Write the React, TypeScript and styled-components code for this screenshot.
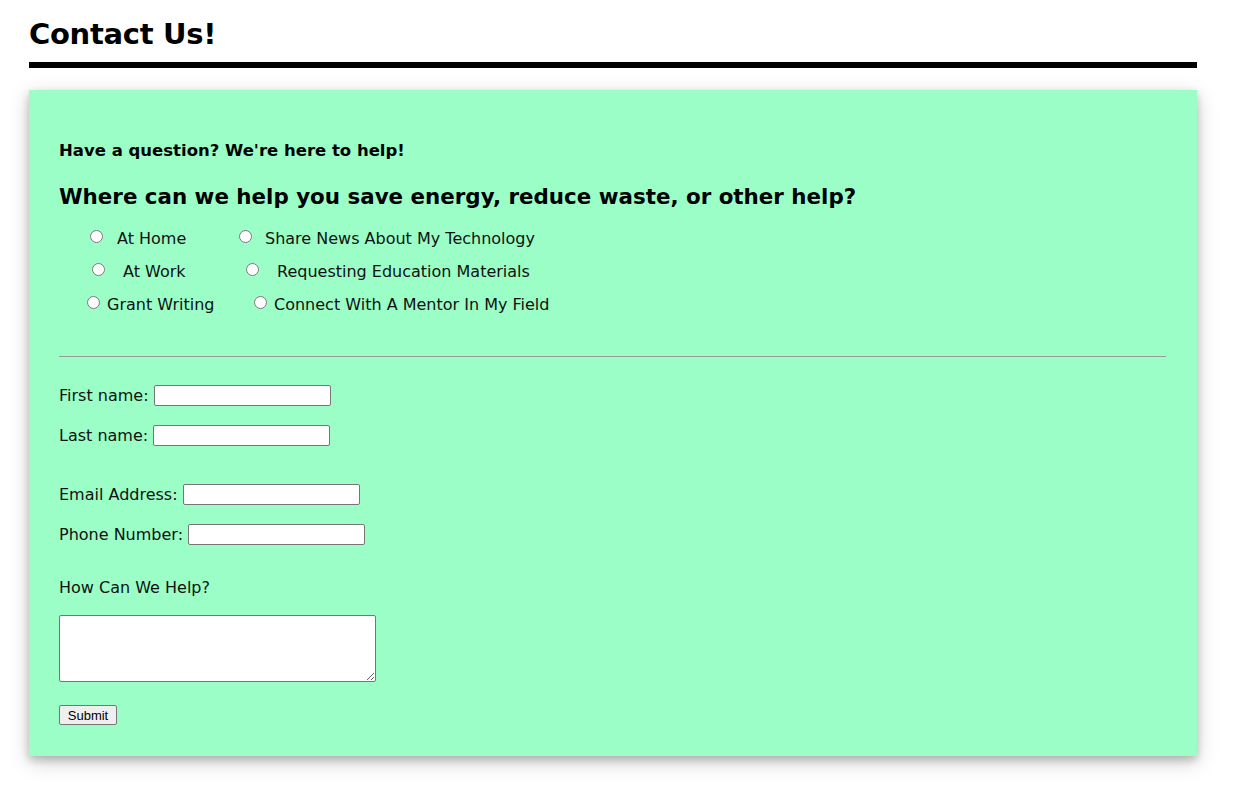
import styled, { createGlobalStyle } from "styled-components";

const GlobalStyle = createGlobalStyle`
  body {
    margin: 0;
    background: #ffffff;
    font-family: "DejaVu Sans", "Open Sans", sans-serif;
    color: #000;
  }
`;

const Page = styled.div`
  padding: 14px 37px 40px 29px;
`;

const Title = styled.h1`
  margin: 0;
  font-size: 29px;
  line-height: 40px;
  font-weight: 700;
  letter-spacing: -0.3px;
`;

const Bar = styled.div`
  margin-top: 8px;
  height: 6px;
  background: #000;
`;

const Card = styled.div`
  margin-top: 22px;
  background: #9afec6;
  padding: 30px 31px 31px 30px;
  box-shadow: 0 4px 8px 0 rgba(0, 0, 0, 0.2), 0 6px 20px 0 rgba(0, 0, 0, 0.19);
`;

const Intro = styled.h4`
  margin: 20px 0 0;
  font-size: 16.5px;
  line-height: 22px;
  font-weight: 700;
`;

const Question = styled.h2`
  margin: 20px 0 0;
  font-size: 21.4px;
  line-height: 30px;
  font-weight: 700;
`;

const Options = styled.div`
  margin-top: 10px;
`;

const OptionRow = styled.div<{ $indent: number }>`
  display: flex;
  align-items: center;
  height: 33px;
  padding-left: ${(p) => p.$indent}px;
  font-size: 16px;
  color: #111;
`;

const Option = styled.label<{ $gap: number; $width?: number }>`
  display: flex;
  align-items: center;
  gap: ${(p) => p.$gap}px;
  width: ${(p) => (p.$width ? `${p.$width}px` : "auto")};
  white-space: nowrap;
`;

const Radio = styled.input.attrs({ type: "radio" })`
  width: 13px;
  height: 13px;
  margin: 0 0 4px;
`;

const Rule = styled.hr`
  margin: 35px 0 0;
  border: none;
  border-top: 1px solid #9a9a9a;
  height: 0;
`;

const Form = styled.form`
  display: flex;
  flex-direction: column;
  padding-top: 28px;
  font-size: 16px;
  color: #111;
`;

const Field = styled.label<{ $space: number }>`
  display: flex;
  align-items: center;
  gap: 5px;
  height: 21px;
  margin-top: ${(p) => p.$space}px;
`;

const TextInput = styled.input`
  box-sizing: border-box;
  width: 177px;
  height: 21px;
  border: 1px solid #767676;
  border-radius: 2px;
  background: #fff;
  padding: 1px 2px;
  font-size: 13px;
`;

const HelpLabel = styled.label`
  margin-top: 33px;
  line-height: 20px;
`;

const Message = styled.textarea`
  box-sizing: border-box;
  margin-top: 17px;
  width: 317px;
  height: 67px;
  border: 1px solid #767676;
  border-radius: 2px;
  background: #fff;
`;

const Submit = styled.button`
  box-sizing: border-box;
  margin-top: 23px;
  align-self: flex-start;
  width: 58px;
  height: 20px;
  padding: 0;
  font-family: "Liberation Sans", Arial, sans-serif;
  font-size: 13px;
  color: #000;
  background: #efefef;
  border: 1px solid #767676;
  border-radius: 2px;
`;

const rows = [
  { indent: 31, first: { text: "At Home", gap: 14, width: 149 }, second: { text: "Share News About My Technology", gap: 13 } },
  { indent: 33, first: { text: "At Work", gap: 18, width: 154 }, second: { text: "Requesting Education Materials", gap: 18 } },
  { indent: 28, first: { text: "Grant Writing", gap: 7, width: 167 }, second: { text: "Connect With A Mentor In My Field", gap: 7 } },
];

export default function App() {
  return (
    <>
      <GlobalStyle />
      <Page>
        <Title>Contact Us!</Title>
        <Bar />
        <Card>
          <Intro>Have a question? We're here to help!</Intro>
          <Question>Where can we help you save energy, reduce waste, or other help?</Question>
          <Options>
            {rows.map((r) => (
              <OptionRow key={r.first.text} $indent={r.indent}>
                <Option $gap={r.first.gap} $width={r.first.width}>
                  <Radio name="help" />
                  {r.first.text}
                </Option>
                <Option $gap={r.second.gap}>
                  <Radio name="help" />
                  {r.second.text}
                </Option>
              </OptionRow>
            ))}
          </Options>
          <Rule />
          <Form onSubmit={(e) => e.preventDefault()}>
            <Field $space={0}>
              First name: <TextInput />
            </Field>
            <Field $space={19}>
              Last name: <TextInput />
            </Field>
            <Field $space={38}>
              Email Address: <TextInput />
            </Field>
            <Field $space={19}>
              Phone Number: <TextInput />
            </Field>
            <HelpLabel>How Can We Help?</HelpLabel>
            <Message />
            <Submit type="submit">Submit</Submit>
          </Form>
        </Card>
      </Page>
    </>
  );
}
